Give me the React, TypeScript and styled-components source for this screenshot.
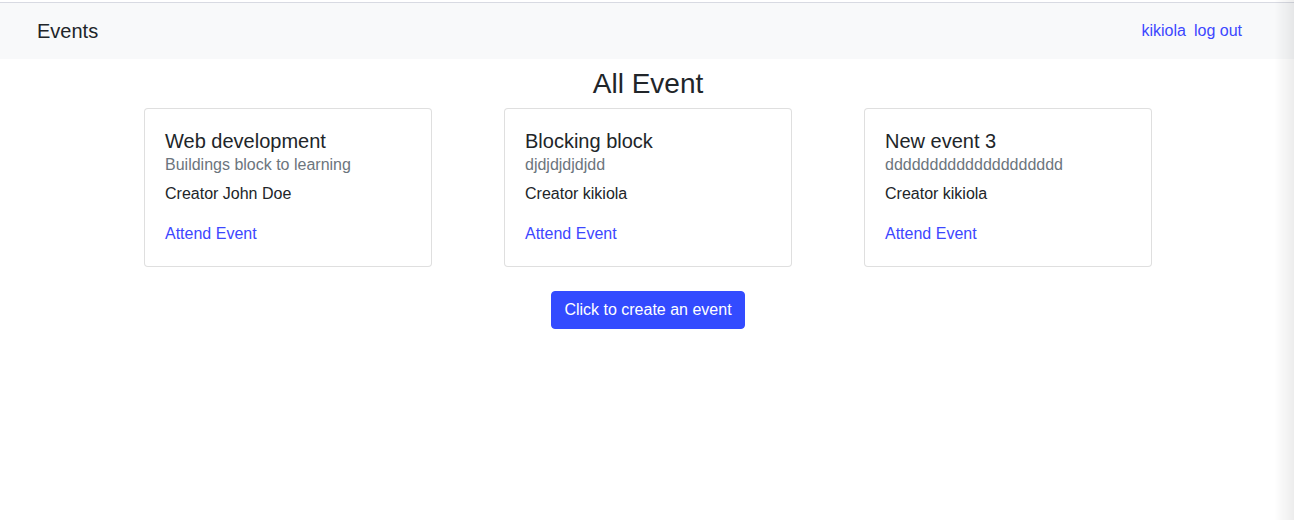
import styled, { createGlobalStyle } from "styled-components";

const GlobalStyle = createGlobalStyle`
  html, body {
    margin: 0;
    padding: 0;
    background: #fff;
  }
  body {
    font-family: "Liberation Sans", Arial, sans-serif;
    font-size: 16px;
    line-height: 1.5;
    color: #212529;
  }
  * {
    box-sizing: border-box;
  }
`;

const Page = styled.div`
  min-height: 520px;
  padding-top: 2px;
`;

const Navbar = styled.nav`
  display: flex;
  align-items: center;
  justify-content: space-between;
  height: 57px;
  padding: 0 52px 0 37px;
  background: #f8f9fa;
  border-top: 1px solid #d8dae2;
`;

const Brand = styled.a`
  font-size: 20px;
  line-height: 30px;
  color: #212529;
  text-decoration: none;
`;

const NavLinks = styled.div`
  display: flex;
  gap: 8px;
`;

const NavLink = styled.a`
  color: #3d47ff;
  text-decoration: none;
  font-size: 16px;
`;

const Main = styled.main`
  display: flex;
  flex-direction: column;
  align-items: center;
  padding-left: 2px;
`;

const Heading = styled.h3`
  margin: 8px 0 8px;
  font-size: 28px;
  font-weight: 400;
  line-height: 33px;
`;

const CardRow = styled.div`
  display: grid;
  grid-template-columns: repeat(3, 288px);
  column-gap: 72px;
`;

const Card = styled.div`
  display: flex;
  flex-direction: column;
  padding: 20px;
  border: 1px solid rgba(0, 0, 0, 0.125);
  border-radius: 4px;
  background: #fff;
`;

const CardTitle = styled.h5`
  margin: 0;
  font-size: 20px;
  font-weight: 400;
  line-height: 24px;
`;

const CardSubtitle = styled.h6`
  margin: 0 0 5px;
  font-size: 16px;
  font-weight: 400;
  line-height: 24px;
  color: #6c757d;
`;

const CardText = styled.p`
  margin: 0 0 16px;
`;

const CardLink = styled.a`
  color: #3d47ff;
  text-decoration: none;
`;

const CreateButton = styled.button`
  margin-top: 24px;
  padding: 6px 12px;
  font-family: inherit;
  font-size: 16px;
  line-height: 24px;
  color: #fff;
  background: #334bff;
  border: 1px solid #334bff;
  border-radius: 4px;
  cursor: pointer;
`;

const EdgeShade = styled.div`
  position: fixed;
  top: 0;
  right: 0;
  bottom: 0;
  width: 20px;
  pointer-events: none;
  background: linear-gradient(to right, rgba(0, 0, 0, 0), rgba(0, 0, 0, 0.07));
`;

const events = [
  { title: "Web development", desc: "Buildings block to learning", creator: "John Doe" },
  { title: "Blocking block", desc: "djdjdjdjdjdd", creator: "kikiola" },
  { title: "New event 3", desc: "dddddddddddddddddddd", creator: "kikiola" },
];

export default function App() {
  return (
    <Page>
      <GlobalStyle />
      <Navbar>
        <Brand href="#">Events</Brand>
        <NavLinks>
          <NavLink href="#">kikiola</NavLink>
          <NavLink href="#">log out</NavLink>
        </NavLinks>
      </Navbar>
      <Main>
        <Heading>All Event</Heading>
        <CardRow>
          {events.map((ev, i) => (
            <Card key={i}>
              <CardTitle>{ev.title}</CardTitle>
              <CardSubtitle>{ev.desc}</CardSubtitle>
              <CardText>Creator {ev.creator}</CardText>
              <CardLink href="#">Attend Event</CardLink>
            </Card>
          ))}
        </CardRow>
        <CreateButton>Click to create an event</CreateButton>
      </Main>
      <EdgeShade />
    </Page>
  );
}
